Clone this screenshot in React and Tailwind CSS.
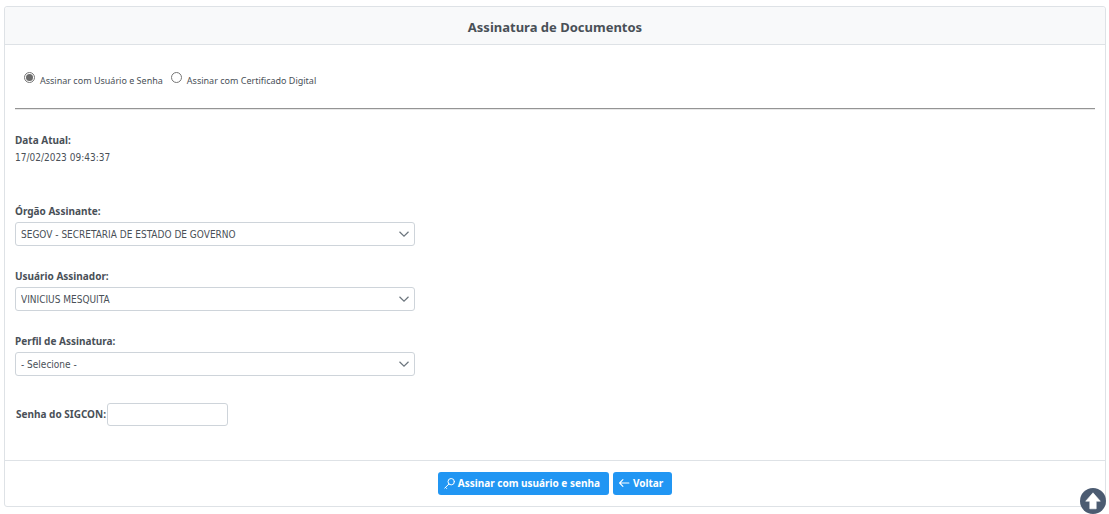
import { useState } from "react";

const BODY_FONT = "font-['DejaVu_Sans_Condensed','DejaVu_Sans',sans-serif]";
const STRONG_FONT = "font-['Noto_Sans','Open_Sans',sans-serif]";

function SelectField({ id, label, options }) {
  return (
    <div className="flex flex-col gap-[3px]">
      <label htmlFor={id} className={`self-start leading-4 font-bold ${STRONG_FONT}`}>
        {label}
      </label>
      <div className="grid w-full max-w-[400px] items-center">
        <select
          id={id}
          className="col-start-1 row-start-1 h-6 w-full appearance-none rounded-[3px] border border-[#ced4da] bg-white pr-7 pl-[5px] outline-none focus:border-[#2196f3]"
        >
          {options.map((option) => (
            <option key={option}>{option}</option>
          ))}
        </select>
        <svg
          viewBox="0 0 10 6"
          className="pointer-events-none col-start-1 row-start-1 mr-[6px] h-[6px] w-[10px] justify-self-end"
          fill="none"
          stroke="#6c757d"
          strokeWidth="1.2"
          aria-hidden="true"
        >
          <path d="M0.5 0.7 5 5.1 9.5 0.7" />
        </svg>
      </div>
    </div>
  );
}

function RadioOption({ value, label, mode, onChange }) {
  return (
    <label className="flex items-start gap-[5px]">
      <input
        type="radio"
        name="modo"
        value={value}
        checked={mode === value}
        onChange={() => onChange(value)}
        className="grid size-[11px] appearance-none place-items-center rounded-full border border-[#767676] bg-white before:size-[7px] before:rounded-full checked:before:bg-[#6b6b6b]"
      />
      <span className={`pt-px text-[9px] leading-4 ${STRONG_FONT}`}>{label}</span>
    </label>
  );
}

function ActionButton({ icon, children }) {
  return (
    <button
      type="button"
      className={`flex h-[23px] items-center gap-[3px] rounded-[3px] bg-[#2196f3] pr-[9px] pl-[6px] font-bold text-white hover:bg-[#0d89ec] ${STRONG_FONT}`}
    >
      {icon}
      <span>{children}</span>
    </button>
  );
}

const keyIcon = (
  <svg viewBox="0 0 11 11" className="size-[11px]" fill="none" stroke="currentColor" strokeWidth="1" strokeLinecap="round" strokeLinejoin="round" aria-hidden="true">
    <circle cx="7.2" cy="3.7" r="3.2" />
    <path d="M4.9 6 0.7 10.2M1.5 9.4 2.6 10.5" />
  </svg>
);

const backIcon = (
  <svg viewBox="0 0 11 11" className="size-[11px]" fill="none" stroke="currentColor" strokeWidth="1.1" strokeLinecap="round" strokeLinejoin="round" aria-hidden="true">
    <path d="M9.9 5H0.6M3.9 1.7 0.6 5 3.9 8.3" />
  </svg>
);

export default function App() {
  const [mode, setMode] = useState("senha");

  return (
    <main className={`bg-white pt-[6px] pr-[3px] pb-[7px] pl-1 text-[10px] text-[#495057] ${BODY_FONT}`}>
      <form className="rounded-[3px] border border-[#dee2e6]" onSubmit={(e) => e.preventDefault()}>
        <header className="rounded-t-[3px] border-b border-[#dee2e6] bg-[#f8f9fa] pt-[10px] pb-[7px] text-center">
          <h1 className={`text-[13px] leading-5 font-bold ${STRONG_FONT}`}>Assinatura de Documentos</h1>
        </header>

        <div className="px-[10px] pt-[27px] pb-[34px]">
          <div className="flex gap-2 pl-[9px]">
            <RadioOption value="senha" label="Assinar com Usuário e Senha" mode={mode} onChange={setMode} />
            <RadioOption value="certificado" label="Assinar com Certificado Digital" mode={mode} onChange={setMode} />
          </div>

          <hr className="mt-[19px] h-[2px] border-t border-b border-t-[#949494] border-b-[#e8e8e8]" />

          <div className="mt-[21px] leading-[18px]">
            <p className={`font-bold ${STRONG_FONT}`}>Data Atual:</p>
            <p>17/02/2023 09:43:37</p>
          </div>

          <div className="mt-9 flex flex-col gap-[22px]">
            <SelectField id="orgao" label="Órgão Assinante:" options={["SEGOV - SECRETARIA DE ESTADO DE GOVERNO"]} />
            <SelectField id="usuario" label="Usuário Assinador:" options={["VINICIUS MESQUITA"]} />
            <SelectField id="perfil" label="Perfil de Assinatura:" options={["- Selecione -"]} />
          </div>

          <div className="mt-[27px] flex items-center gap-px pl-px">
            <label htmlFor="senha" className={`font-bold ${STRONG_FONT}`}>
              Senha do SIGCON:
            </label>
            <input
              id="senha"
              type="password"
              className="h-[23px] w-[121px] rounded-[3px] border border-[#ced4da] bg-white px-[5px] outline-none focus:border-[#2196f3]"
            />
          </div>
        </div>

        <footer className="flex justify-center gap-1 border-t border-[#dee2e6] py-[11px]">
          <ActionButton icon={keyIcon}>Assinar com usuário e senha</ActionButton>
          <ActionButton icon={backIcon}>Voltar</ActionButton>
        </footer>
      </form>

      <a href="#root" aria-label="Voltar ao topo" className="fixed right-[3px] bottom-0 block size-[26px]">
        <svg viewBox="0 0 26 26" className="size-[26px]" aria-hidden="true">
          <circle cx="13" cy="13" r="13" fill="#4b5b71" />
          <path d="M13 4.8 20.3 13.2H16.2V20.8H9.8V13.2H5.7Z" fill="#fff" stroke="#fff" strokeWidth="0.6" strokeLinejoin="round" />
        </svg>
      </a>
    </main>
  );
}
